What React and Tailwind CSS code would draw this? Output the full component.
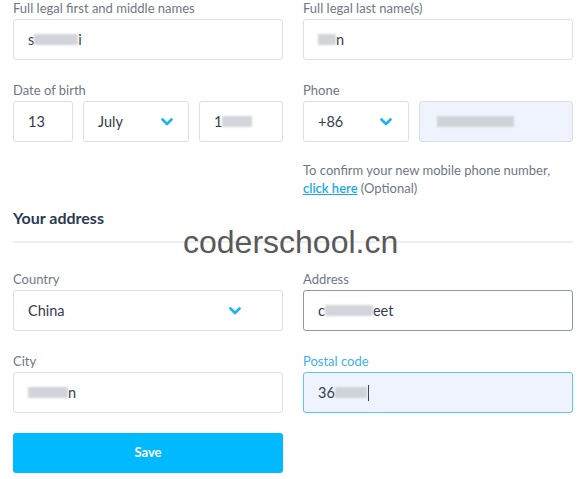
import { useState } from 'react';

const font = { fontFamily: "Lato, 'Open Sans', sans-serif" };

function Chevron({ className }) {
  return (
    <svg viewBox="0 0 12 8" className={className} fill="none">
      <polyline points="1.5,1.5 6,6 10.5,1.5" stroke="#1ab3f2" strokeWidth="2.6" strokeLinecap="round" strokeLinejoin="round" />
    </svg>
  );
}

// masked / pixelated value, as in the screenshot
function Blur({ w }) {
  return <span className="inline-block h-[11px] bg-[#c7cad1] blur-[1px] align-middle opacity-80" style={{ width: w }} />;
}

function Label({ children, active }) {
  return (
    <div className={`text-[13px] leading-4 mb-[3px] ${active ? 'text-[#3db2e8]' : 'text-[#6d7886]'}`}>{children}</div>
  );
}

function Box({ children, className = '' }) {
  return (
    <div className={`h-[41px] flex items-center px-[14px] rounded-[3px] border text-[14.5px] text-[#333d4c] ${className}`}>
      {children}
    </div>
  );
}

export default function App() {
  const [saving, setSaving] = useState(false);

  return (
    <div className="w-[578px] h-[479px] bg-white relative overflow-hidden" style={font}>
      <div className="pl-[13px] pr-[5px]">
        {/* names */}
        <div className="grid grid-cols-[270px_270px] gap-x-5">
          <div>
            <Label>Full legal first and middle names</Label>
            <Box className="border-[#dcdfe5]">
              s<Blur w={44} />i
            </Box>
          </div>
          <div>
            <Label>Full legal last name(s)</Label>
            <Box className="border-[#dcdfe5]">
              <Blur w={18} />n
            </Box>
          </div>
        </div>

        {/* birth + phone */}
        <div className="grid grid-cols-[270px_270px] gap-x-5 mt-[22px]">
          <div>
            <Label>Date of birth</Label>
            <div className="flex gap-[10px]">
              <Box className="w-[60px] border-[#dcdfe5]">13</Box>
              <Box className="w-[106px] border-[#dcdfe5] justify-between pr-[15px]">
                July
                <Chevron className="w-[12px] h-[8px]" />
              </Box>
              <Box className="w-[84px] border-[#dcdfe5]">
                1<Blur w={30} />
              </Box>
            </div>
          </div>
          <div>
            <Label>Phone</Label>
            <div className="flex gap-[10px]">
              <Box className="w-[106px] border-[#dcdfe5] justify-between pr-[16px]">
                +86
                <Chevron className="w-[12px] h-[8px]" />
              </Box>
              <Box className="w-[154px] border-[#d9dee6] bg-[#eef3fd] pl-[17px]">
                <Blur w={77} />
              </Box>
            </div>
            <p className="mt-[19px] text-[13px] leading-[18px] text-[#6d7886]">
              To confirm your new mobile phone number,
              <br />
              <a href="#" className="text-[#1aa9ea] underline font-semibold">click here</a> (Optional)
            </p>
          </div>
        </div>

        {/* address */}
        <h2 className="mt-[11px] text-[16px] leading-5 font-bold text-[#2b3a55]">Your address</h2>
        <div className="mt-[13px] h-[2px] w-[560px] bg-[#eeeff1]" />

        <div className="grid grid-cols-[270px_270px] gap-x-5 mt-[28px]">
          <div>
            <Label>Country</Label>
            <Box className="border-[#dcdfe5] justify-between pr-[41px]">
              China
              <Chevron className="w-[12px] h-[8px]" />
            </Box>
          </div>
          <div>
            <Label>Address</Label>
            <Box className="border-[#8e98a4]">
              c<Blur w={48} />eet
            </Box>
          </div>
          <div className="mt-[22px]">
            <Label>City</Label>
            <Box className="border-[#dcdfe5]">
              <Blur w={40} />n
            </Box>
          </div>
          <div className="mt-[22px]">
            <Label active>Postal code</Label>
            <Box className="border-[#5cc6f5] bg-[#eef3fd]">
              36<Blur w={32} />
              <span className="inline-block w-px h-[16px] bg-[#333d4c] ml-[1px]" />
            </Box>
          </div>
        </div>

        <button
          type="button"
          onClick={() => setSaving(!saving)}
          className="mt-5 w-[270px] h-10 rounded-[3px] bg-[#00b9ff] text-white text-[13px] font-bold"
        >
          Save
        </button>
      </div>

      {/* watermark */}
      <div
        className="absolute left-[183px] top-[226px] text-[32px] leading-none text-[#595959] pointer-events-none"
        style={{ fontFamily: "'Liberation Sans', Arial, sans-serif" }}
      >
        coderschool.cn
      </div>
    </div>
  );
}
